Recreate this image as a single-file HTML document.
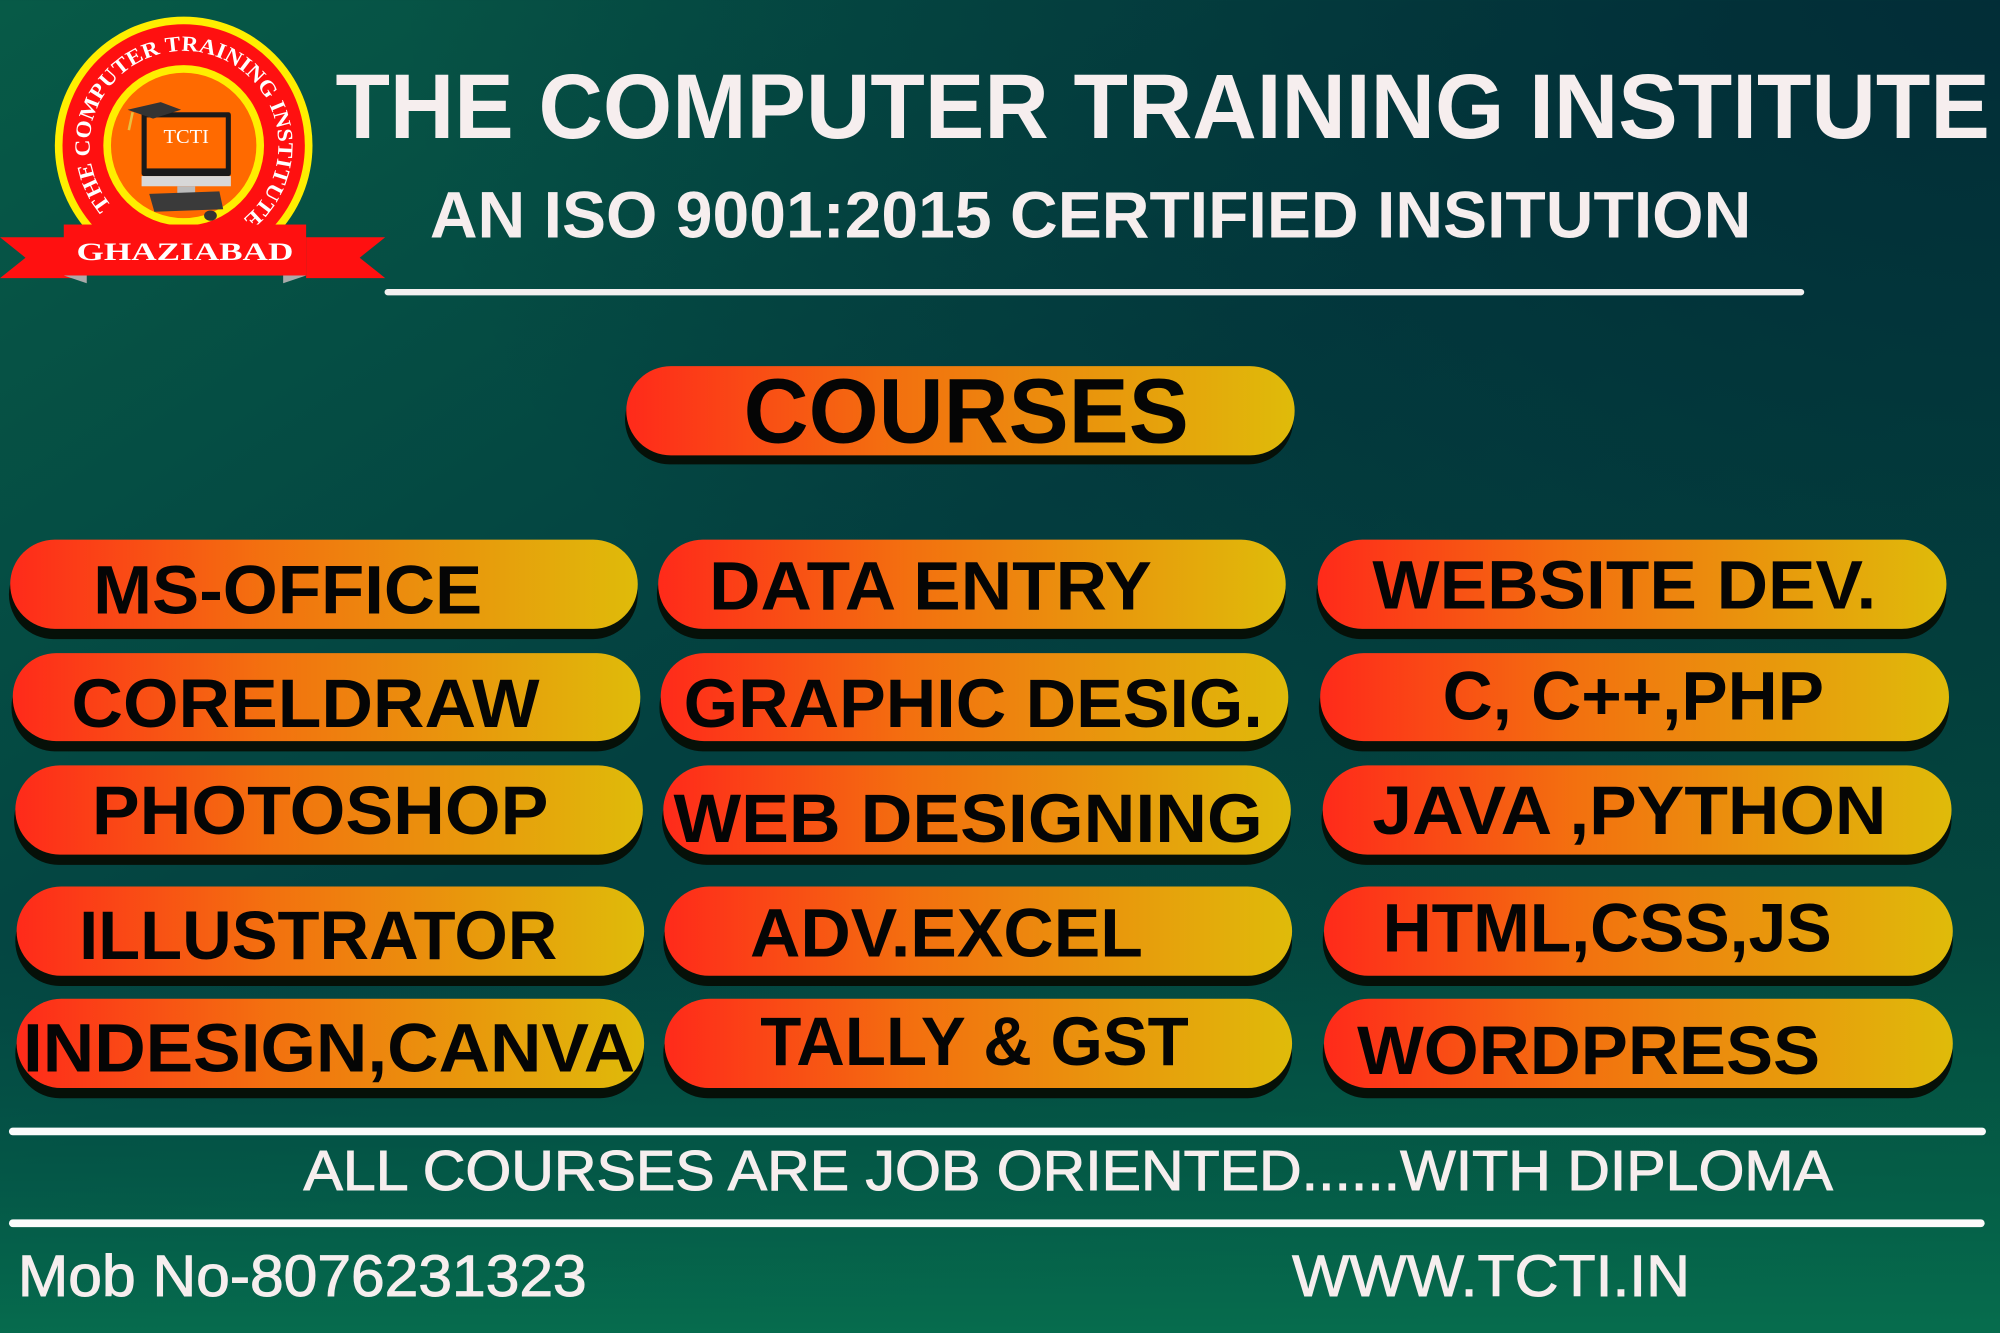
<!DOCTYPE html>
<html><head><meta charset="utf-8"><style>html,body{margin:0;padding:0;background:#04433f}svg{display:block}</style></head>
<body>
<svg width="2000" height="1333" viewBox="0 0 1568 1045" xmlns="http://www.w3.org/2000/svg" font-family="'Liberation Sans',sans-serif">
<defs>
<linearGradient id="bg" x1="0" y1="0" x2="1" y2="1">
<stop offset="0" stop-color="#075a47"/><stop offset="0.45" stop-color="#034040"/><stop offset="1" stop-color="#04503f"/>
</linearGradient>
<linearGradient id="bg2" x1="0" y1="0" x2="0" y2="1">
<stop offset="0" stop-color="#023038" stop-opacity="0.0"/><stop offset="0.7" stop-color="#05604a" stop-opacity="0"/><stop offset="1" stop-color="#06704f" stop-opacity="0.9"/>
</linearGradient>
<radialGradient id="tr" cx="1" cy="0" r="0.8"><stop offset="0" stop-color="#022b36" stop-opacity="0.9"/><stop offset="1" stop-color="#022b36" stop-opacity="0"/></radialGradient>
<linearGradient id="pg" x1="0" y1="0" x2="1" y2="0">
<stop offset="0" stop-color="#ff2a1a"/><stop offset="0.4" stop-color="#f3700f"/><stop offset="1" stop-color="#dfbb0a"/>
</linearGradient>
<path id="arc" d="M87.5,161.4 A74,74 0 1 1 181,178.1"/>
</defs>
<rect width="1568" height="1045" fill="url(#bg)"/>
<rect width="1568" height="1045" fill="url(#tr)"/>
<rect width="1568" height="1045" fill="url(#bg2)"/>

<!-- logo -->
<circle cx="144" cy="114" r="101" fill="#ffee00"/>
<circle cx="144" cy="114" r="95" fill="#ff1010"/>
<circle cx="144" cy="114" r="63" fill="#ffee00"/>
<circle cx="144" cy="114" r="57" fill="#ff6a00"/>
<text font-family="'Liberation Serif',serif" font-weight="bold" font-size="17" fill="#fff"><textPath href="#arc" textLength="350" lengthAdjust="spacingAndGlyphs">THE COMPUTER TRAINING INSTITUTE</textPath></text>
<rect x="111" y="88" width="70" height="50" fill="#1a1a1a" rx="2"/>
<rect x="115" y="92" width="62" height="40" fill="#ff6a00"/>
<text x="146" y="112" font-family="'Liberation Serif',serif" font-size="16" fill="#fff" text-anchor="middle">TCTI</text>
<rect x="111" y="138" width="70" height="8" fill="#d8d8d8"/>
<rect x="139" y="146" width="14" height="6" fill="#bbb"/>
<polygon points="117,152 172,150 175,164 121,166" fill="#3a3a3a"/>
<ellipse cx="165" cy="169" rx="5" ry="4" fill="#333"/>
<polygon points="100,86 126,80 142,86 120,93" fill="#333"/>
<line x1="104" y1="88" x2="101" y2="102" stroke="#e8c040" stroke-width="2"/>
<polygon points="0,186 60,186 60,218 0,218 20,202" fill="#ff1010"/>
<polygon points="302,186 240,186 240,218 302,218 282,202" fill="#ff1010"/>
<rect x="50" y="176" width="190" height="40" fill="#ff1010"/>
<polygon points="50,216 68,216 68,222" fill="#aaa"/>
<polygon points="240,216 222,216 222,222" fill="#aaa"/>
<text x="145" y="204" font-family="'Liberation Serif',serif" font-weight="bold" font-size="20" fill="#fff" text-anchor="middle" textLength="170" lengthAdjust="spacingAndGlyphs">GHAZIABAD</text>

<!-- header -->
<text x="263" y="108" font-weight="bold" font-size="72" fill="#f6eeee" textLength="1297" lengthAdjust="spacingAndGlyphs">THE COMPUTER TRAINING INSTITUTE</text>
<text x="337" y="186" font-weight="bold" font-size="52" fill="#f6eeee" textLength="1036" lengthAdjust="spacingAndGlyphs">AN ISO 9001:2015 CERTIFIED INSITUTION</text>
<line x1="304" y1="229" x2="1412" y2="229" stroke="#f3f0f0" stroke-width="5" stroke-linecap="round"/>

<!-- courses -->
<g>
<rect x="490" y="294" width="524" height="70" rx="35" fill="#061008"/>
<rect x="491" y="287" width="524" height="70" rx="35" fill="url(#pg)"/>
<text x="583" y="347" font-weight="bold" font-size="72" fill="#050505" textLength="349" lengthAdjust="spacingAndGlyphs">COURSES</text>
</g>

<g font-weight="bold" font-size="54" fill="#050505">
<rect x="7" y="431" width="493" height="70" rx="35" fill="#061008"/><rect x="8" y="423" width="492" height="70" rx="35" fill="url(#pg)"/>
<text x="73" y="481" textLength="305" lengthAdjust="spacingAndGlyphs">MS-OFFICE</text>
<rect x="515" y="431" width="493" height="70" rx="35" fill="#061008"/><rect x="516" y="423" width="492" height="70" rx="35" fill="url(#pg)"/>
<text x="556" y="478" textLength="347" lengthAdjust="spacingAndGlyphs">DATA ENTRY</text>
<rect x="1032" y="431" width="494" height="70" rx="35" fill="#061008"/><rect x="1033" y="423" width="493" height="70" rx="35" fill="url(#pg)"/>
<text x="1076" y="477" textLength="395" lengthAdjust="spacingAndGlyphs">WEBSITE DEV.</text>
<rect x="9" y="520" width="493" height="69" rx="34" fill="#061008"/><rect x="10" y="512" width="492" height="69" rx="34" fill="url(#pg)"/>
<text x="56" y="570" textLength="367" lengthAdjust="spacingAndGlyphs">CORELDRAW</text>
<rect x="517" y="520" width="493" height="69" rx="34" fill="#061008"/><rect x="518" y="512" width="492" height="69" rx="34" fill="url(#pg)"/>
<text x="536" y="570" textLength="454" lengthAdjust="spacingAndGlyphs">GRAPHIC DESIG.</text>
<rect x="1034" y="520" width="494" height="69" rx="34" fill="#061008"/><rect x="1035" y="512" width="493" height="69" rx="34" fill="url(#pg)"/>
<text x="1131" y="564" textLength="299" lengthAdjust="spacingAndGlyphs">C, C++,PHP</text>
<rect x="11" y="608" width="493" height="70" rx="35" fill="#061008"/><rect x="12" y="600" width="492" height="70" rx="35" fill="url(#pg)"/>
<text x="72" y="654" textLength="358" lengthAdjust="spacingAndGlyphs">PHOTOSHOP</text>
<rect x="519" y="608" width="493" height="70" rx="35" fill="#061008"/><rect x="520" y="600" width="492" height="70" rx="35" fill="url(#pg)"/>
<text x="528" y="660" textLength="462" lengthAdjust="spacingAndGlyphs">WEB DESIGNING</text>
<rect x="1036" y="608" width="494" height="70" rx="35" fill="#061008"/><rect x="1037" y="600" width="493" height="70" rx="35" fill="url(#pg)"/>
<text x="1076" y="654" textLength="403" lengthAdjust="spacingAndGlyphs">JAVA ,PYTHON</text>
<rect x="12" y="703" width="493" height="70" rx="35" fill="#061008"/><rect x="13" y="695" width="492" height="70" rx="35" fill="url(#pg)"/>
<text x="62" y="752" textLength="375" lengthAdjust="spacingAndGlyphs">ILLUSTRATOR</text>
<rect x="520" y="703" width="493" height="70" rx="35" fill="#061008"/><rect x="521" y="695" width="492" height="70" rx="35" fill="url(#pg)"/>
<text x="588" y="750" textLength="308" lengthAdjust="spacingAndGlyphs">ADV.EXCEL</text>
<rect x="1037" y="703" width="494" height="70" rx="35" fill="#061008"/><rect x="1038" y="695" width="493" height="70" rx="35" fill="url(#pg)"/>
<text x="1084" y="746" textLength="352" lengthAdjust="spacingAndGlyphs">HTML,CSS,JS</text>
<rect x="12" y="791" width="493" height="70" rx="35" fill="#061008"/><rect x="13" y="783" width="492" height="70" rx="35" fill="url(#pg)"/>
<text x="18" y="840" textLength="480" lengthAdjust="spacingAndGlyphs">INDESIGN,CANVA</text>
<rect x="520" y="791" width="493" height="70" rx="35" fill="#061008"/><rect x="521" y="783" width="492" height="70" rx="35" fill="url(#pg)"/>
<text x="596" y="835" textLength="336" lengthAdjust="spacingAndGlyphs">TALLY &amp; GST</text>
<rect x="1037" y="791" width="494" height="70" rx="35" fill="#061008"/><rect x="1038" y="783" width="493" height="70" rx="35" fill="url(#pg)"/>
<text x="1064" y="842" textLength="363" lengthAdjust="spacingAndGlyphs">WORDPRESS</text>
</g>

<line x1="10" y1="887" x2="1554" y2="887" stroke="#fbfbfb" stroke-width="6" stroke-linecap="round"/>
<text x="238" y="933" font-size="44" fill="#f6eeee" textLength="1199" lengthAdjust="spacingAndGlyphs" stroke="#f6eeee" stroke-width="0.8">ALL COURSES ARE JOB ORIENTED......WITH DIPLOMA</text>
<line x1="10" y1="959" x2="1553" y2="959" stroke="#fbfbfb" stroke-width="6" stroke-linecap="round"/>
<text x="14" y="1016" font-size="46" fill="#f6eeee" textLength="446" lengthAdjust="spacingAndGlyphs" stroke="#f6eeee" stroke-width="0.8">Mob No-8076231323</text>
<text x="1013" y="1016" font-size="46" fill="#f6eeee" textLength="312" lengthAdjust="spacingAndGlyphs" stroke="#f6eeee" stroke-width="0.8">WWW.TCTI.IN</text>
</svg>
</body></html>
